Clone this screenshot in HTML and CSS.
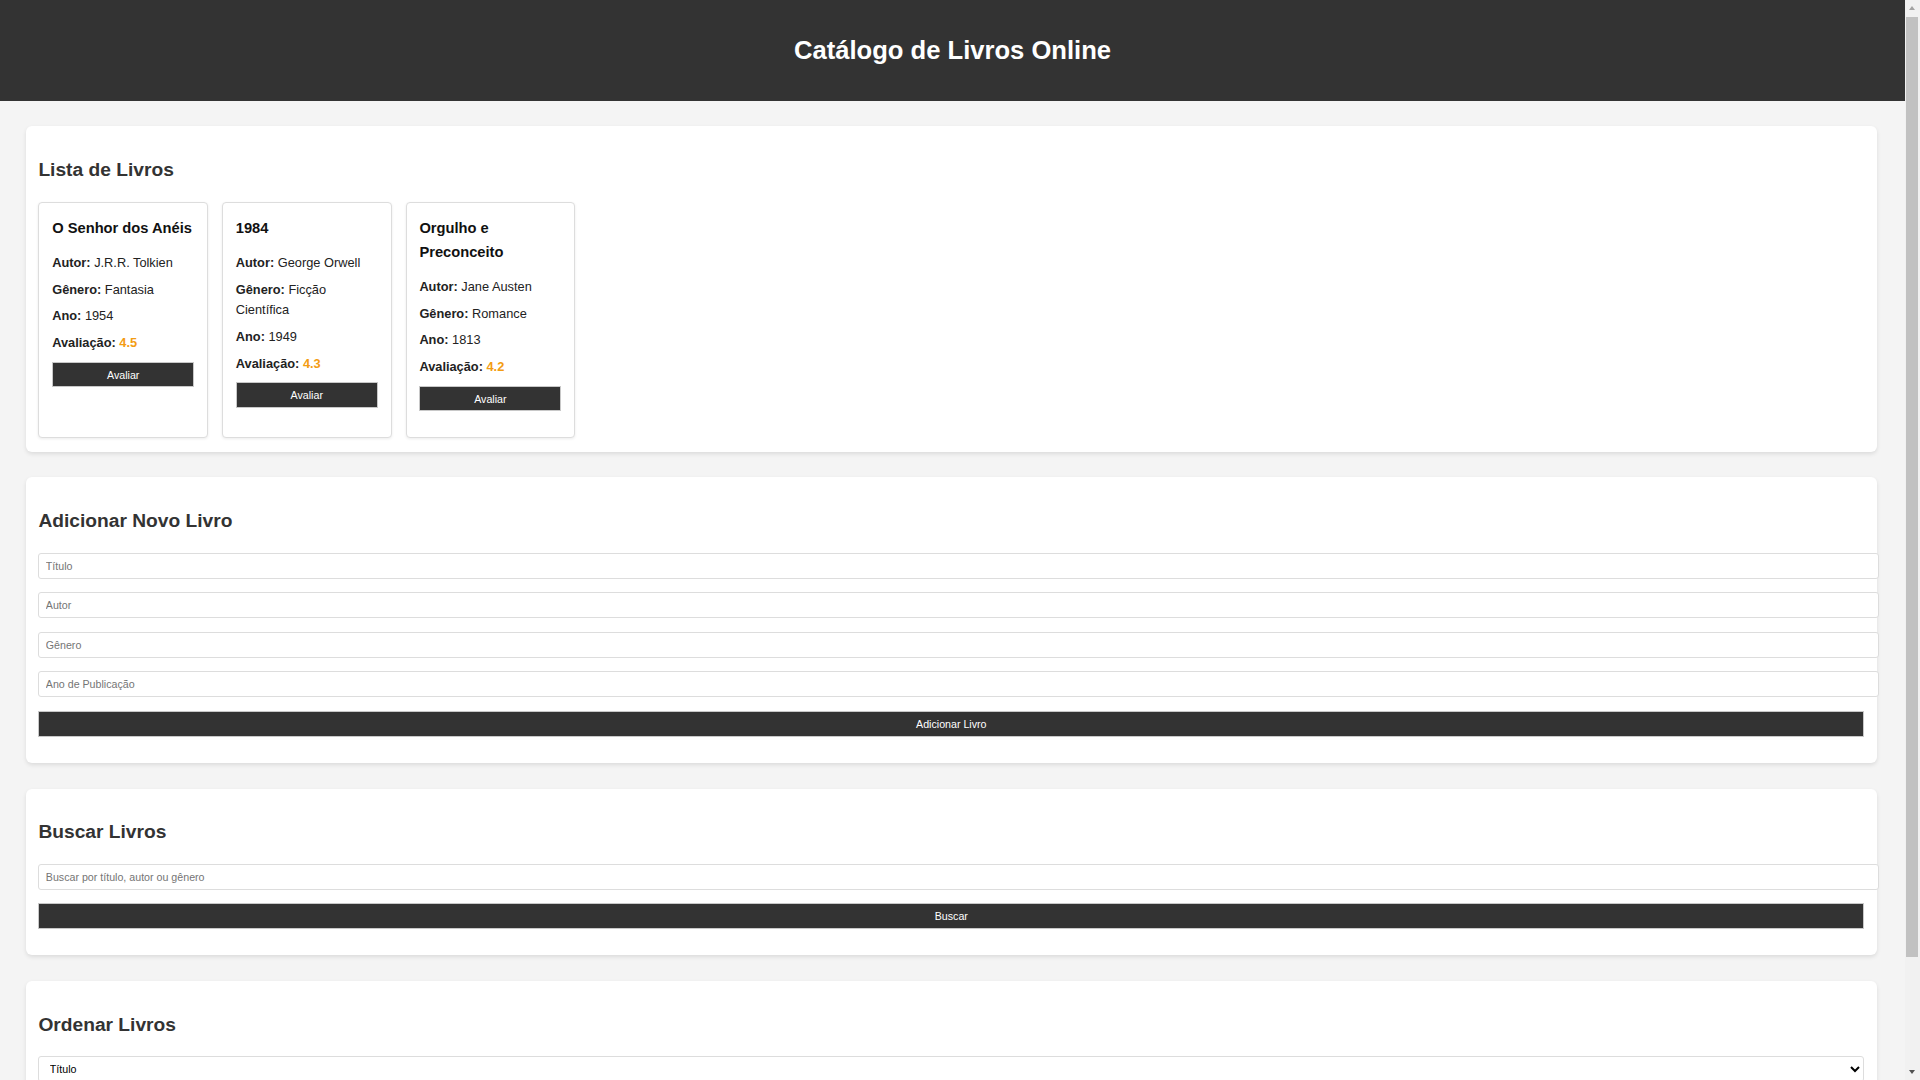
FILE: index.html
```html
<!DOCTYPE html>
<html lang="pt-BR">
<head>
<meta charset="UTF-8">
<title>Catálogo de Livros Online</title>
<link rel="stylesheet" href="styles.css">
</head>
<body>
<header class="site-header">
  <h1 class="site-title">Catálogo de Livros Online</h1>
</header>
<main class="page">
  <section class="panel">
    <h2 class="panel-title">Lista de Livros</h2>
    <div class="book-list">
      <article class="book-card">
        <h3 class="book-title">O Senhor dos Anéis</h3>
        <p class="book-info"><strong>Autor:</strong> J.R.R. Tolkien</p>
        <p class="book-info"><strong>Gênero:</strong> Fantasia</p>
        <p class="book-info"><strong>Ano:</strong> 1954</p>
        <p class="book-info"><strong>Avaliação:</strong> <span class="rating">4.5</span></p>
        <button class="btn btn-card">Avaliar</button>
      </article>
      <article class="book-card">
        <h3 class="book-title">1984</h3>
        <p class="book-info"><strong>Autor:</strong> George Orwell</p>
        <p class="book-info"><strong>Gênero:</strong> Ficção Científica</p>
        <p class="book-info"><strong>Ano:</strong> 1949</p>
        <p class="book-info"><strong>Avaliação:</strong> <span class="rating">4.3</span></p>
        <button class="btn btn-card">Avaliar</button>
      </article>
      <article class="book-card">
        <h3 class="book-title">Orgulho e Preconceito</h3>
        <p class="book-info"><strong>Autor:</strong> Jane Austen</p>
        <p class="book-info"><strong>Gênero:</strong> Romance</p>
        <p class="book-info"><strong>Ano:</strong> 1813</p>
        <p class="book-info"><strong>Avaliação:</strong> <span class="rating">4.2</span></p>
        <button class="btn btn-card">Avaliar</button>
      </article>
    </div>
  </section>

  <section class="panel">
    <h2 class="panel-title">Adicionar Novo Livro</h2>
    <form class="form">
      <input class="field" type="text" placeholder="Título">
      <input class="field" type="text" placeholder="Autor">
      <input class="field" type="text" placeholder="Gênero">
      <input class="field" type="text" placeholder="Ano de Publicação">
      <button class="btn btn-full" type="button">Adicionar Livro</button>
    </form>
  </section>

  <section class="panel">
    <h2 class="panel-title">Buscar Livros</h2>
    <input class="field" type="text" placeholder="Buscar por título, autor ou gênero">
    <button class="btn btn-full" type="button">Buscar</button>
  </section>

  <section class="panel">
    <h2 class="panel-title">Ordenar Livros</h2>
    <select class="select">
      <option>Título</option>
      <option>Autor</option>
      <option>Ano</option>
      <option>Avaliação</option>
    </select>
  </section>
</main>
<div class="scrollbar" aria-hidden="true">
  <span class="sb-arrow sb-up"></span>
  <span class="sb-thumb"></span>
  <span class="sb-arrow sb-down"></span>
</div>
</body>
</html>
```

FILE: styles.css
```css
html, body {
  margin: 0;
  padding: 0;
}

body {
  background: #f4f4f4;
  color: #333;
  font-family: "Liberation Sans", Arial, sans-serif;
  font-size: 12.8px;
  line-height: 1.6;
  padding-right: 15px;
}

/* classic scrollbar look (viewport chrome) */
.scrollbar {
  position: fixed;
  top: 0;
  right: 0;
  width: 15px;
  height: 100vh;
  background: #f1f1f1;
  display: flex;
  flex-direction: column;
}

.sb-arrow {
  position: relative;
  flex: none;
  height: 17px;
}

.sb-up::after {
  content: "";
  position: absolute;
  left: 4px;
  top: 6px;
  border-left: 3.5px solid transparent;
  border-right: 3.5px solid transparent;
  border-bottom: 4px solid #a3a3a3;
}

.sb-down {
  margin-top: auto;
}

.sb-down::after {
  content: "";
  position: absolute;
  left: 4px;
  top: 7px;
  border-left: 3.5px solid transparent;
  border-right: 3.5px solid transparent;
  border-top: 4px solid #505050;
}

.sb-thumb {
  flex: none;
  height: 940px;
  margin: 0 2px 0 1px;
  background: #c1c1c1;
}

.site-header {
  background: #333;
  color: #fff;
  padding: 12.8px 0;
  text-align: center;
}

.site-title {
  margin: 17.15px 0;
  font-size: 25.6px;
  font-weight: bold;
}

.page {
  padding: 25.6px 28px 60px 25.6px;
}

.panel {
  background: #fff;
  border-radius: 6px;
  box-shadow: 0 2px 4px rgba(0, 0, 0, 0.1);
  padding: 12.8px;
  margin-bottom: 25.6px;
}

.panel-title {
  margin: 15.9px 0;
  font-size: 19.2px;
  font-weight: bold;
  color: #333;
}

.book-list {
  display: flex;
  flex-wrap: wrap;
  gap: 14px;
  margin: 1.4px 0 0.6px;
}

.book-card {
  box-sizing: border-box;
  width: 169.6px;
  border: 1px solid #ddd;
  border-radius: 4px;
  box-shadow: 0 1px 3px rgba(0, 0, 0, 0.08);
  padding: 13.2px 12.8px 13.2px;
  background: #fff;
}

.book-title {
  margin: 0 0 12.8px;
  font-size: 14.7px;
  line-height: 24px;
  font-weight: bold;
  color: #111;
}

.book-info {
  margin: 6.4px 0;
  color: #222;
}

.book-info strong {
  font-weight: bold;
}

.rating {
  color: #f39c12;
  font-weight: bold;
}

.btn {
  display: block;
  box-sizing: border-box;
  width: 100%;
  background: #333;
  color: #fff;
  border: 1px solid #c8c8c8;
  padding: 5.8px 0;
  font-family: "Liberation Sans", Arial, sans-serif;
  font-size: 10.67px;
  line-height: 12px;
  text-align: center;
  cursor: pointer;
}

.btn-card {
  margin: 8px 0 12.8px;
}

.btn-full {
  margin: 0 0 13.6px;
}

.form {
  margin: 0;
}

.field {
  display: block;
  box-sizing: content-box;
  width: 100%;
  height: 12px;
  padding: 6px 6.4px;
  margin: 0 0 13.6px;
  border: 1px solid #ddd;
  border-radius: 3px;
  font-family: "Liberation Sans", Arial, sans-serif;
  font-size: 10.67px;
  color: #333;
  background: #fff;
}

.field::placeholder {
  color: #757575;
}

.select {
  display: block;
  box-sizing: border-box;
  width: 100%;
  height: 26px;
  padding: 0 6.4px;
  margin: 0 0 13.6px;
  border: 1px solid #ddd;
  border-radius: 3px;
  font-family: "Liberation Sans", Arial, sans-serif;
  font-size: 10.67px;
  color: #000;
  background: #fff;
}
```
